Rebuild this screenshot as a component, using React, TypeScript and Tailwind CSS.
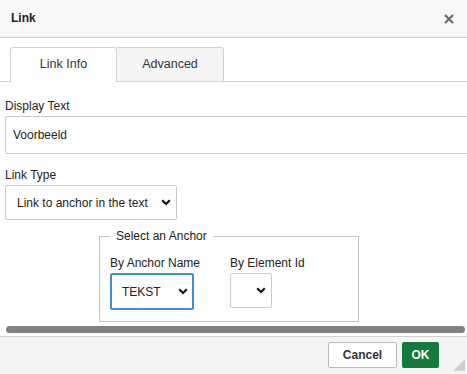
import React from 'react';

const Chevron: React.FC = () => (
  <svg width="10" height="7" viewBox="0 0 10 7" className="shrink-0">
    <path d="M1.2 1.2 5 5 8.8 1.2" fill="none" stroke="#111" strokeWidth="2.1" />
  </svg>
);

export default function App() {
  return (
    <div className="relative w-[467px] h-[374px] overflow-hidden bg-white flex flex-col text-[12px] text-[#222] font-['Liberation_Sans',Arial,sans-serif]">
      {/* title bar */}
      <div className="h-[38px] shrink-0 bg-[#f8f8f8] border-b border-[#d1d1d1] flex items-center justify-between pl-[11px] pr-[13px]">
        <span className="font-bold text-[12px] text-[#222] -mt-[2px]">Link</span>
        <svg width="10" height="10" viewBox="0 0 10 10">
          <path d="M1 1 9 9M9 1 1 9" stroke="#6b6b6b" strokeWidth="2.2" />
        </svg>
      </div>

      {/* tabs */}
      <div className="pt-[9px] shrink-0">
        <div className="flex pl-[10px] border-b border-[#d1d1d1]">
          <div className="w-[107px] h-[35px] -mb-px bg-white border border-b-0 border-[#d1d1d1] rounded-t-[3px] flex items-center justify-center text-[12.5px] text-[#333] pb-[2px]">
            Link Info
          </div>
          <div className="w-[107px] h-[34px] bg-[#f5f5f5] border-t border-r border-[#d1d1d1] rounded-tr-[3px] flex items-center justify-center text-[12.5px] text-[#333] pb-[1px]">
            Advanced
          </div>
        </div>
      </div>

      {/* body */}
      <div className="flex-1 px-[5px] pt-[17px]">
        <div className="leading-[14px]">Display Text</div>
        <div className="mt-[3px] w-[480px] h-[38px] border border-[#c9c9c9] rounded-[2px] flex items-center pl-[7px] pb-[1px]">
          Voorbeeld
        </div>

        <div className="mt-[14px] leading-[14px]">Link Type</div>
        <div className="mt-[3px] w-[172px] h-[35px] border border-[#c9c9c9] rounded-[2px] flex items-center justify-between pl-[11px] pr-[5px]">
          <span>Link to anchor in the text</span>
          <Chevron />
        </div>

        <fieldset className="mt-[9px] ml-[94px] w-[260px] border border-[#c4c4c4] px-[10px] pt-[13px] pb-[11px]">
          <legend className="px-[6px] leading-[14px]">Select an Anchor</legend>
          <div className="flex">
            <div className="w-[120px]">
              <div className="leading-[14px]">By Anchor Name</div>
              <div className="mt-[3px] w-[84px] h-[37px] border-2 border-[#3a8fd6] rounded-[2px] flex items-center justify-between pl-[10px] pr-[4px]">
                <span>TEKST</span>
                <Chevron />
              </div>
            </div>
            <div>
              <div className="leading-[14px]">By Element Id</div>
              <div className="mt-[3px] w-[42px] h-[35px] border border-[#c9c9c9] rounded-[2px] flex items-center justify-end pr-[5px]">
                <Chevron />
              </div>
            </div>
          </div>
        </fieldset>

        <div className="mt-[4px] ml-px mr-[-3px] h-[7px] rounded-full bg-[#808080]" />
      </div>

      {/* footer */}
      <div className="h-[38px] shrink-0 bg-[#f5f5f5] border-t border-[#d1d1d1] flex justify-end gap-[5px] pt-[5px] pr-[28px]">
        <button className="w-[69px] h-[26px] bg-white border border-[#b8b8b8] rounded-[2px] font-bold text-[12px] text-[#333]">
          Cancel
        </button>
        <button className="w-[37px] h-[26px] bg-[#127a3c] rounded-[2px] font-bold text-[12px] text-white">
          OK
        </button>
      </div>

      <svg width="12" height="12" viewBox="0 0 12 12" className="absolute right-[2px] bottom-[3px]">
        <path d="M12 0 12 12 0 12Z" fill="#cfcfcf" />
      </svg>
    </div>
  );
}
